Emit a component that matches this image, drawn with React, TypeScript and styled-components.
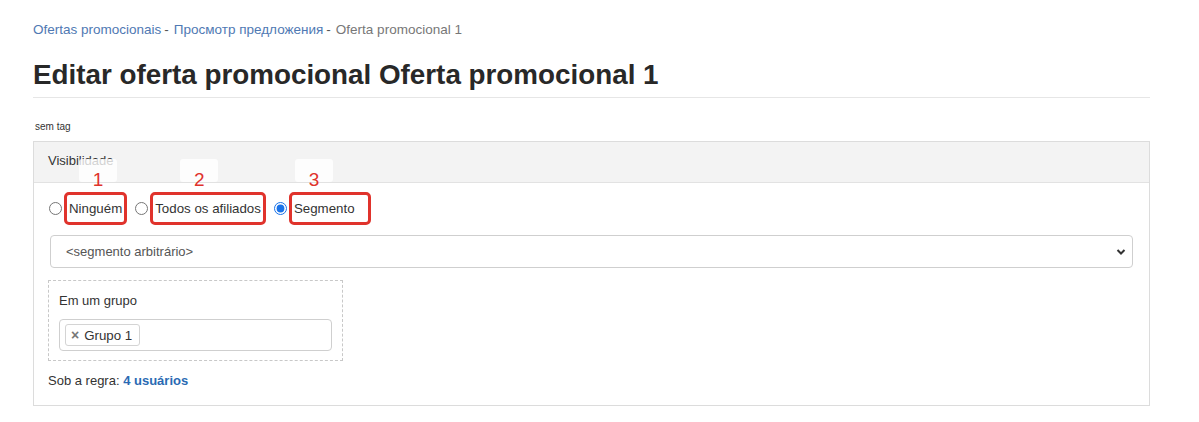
import React from "react";
import styled, { createGlobalStyle } from "styled-components";

const Global = createGlobalStyle`
  html, body { margin: 0; padding: 0; background: #fff; }
  body { font-family: "Liberation Sans", Arial, sans-serif; color: #333; }
  * { box-sizing: border-box; }
`;

const Page = styled.div`
  padding: 21px 49px 0 33px;
`;

const Breadcrumbs = styled.nav`
  display: flex;
  align-items: center;
  font-family: "Liberation Sans", Arial, sans-serif;
  font-size: 13.5px;
  line-height: 18px;
  color: #777;
`;

const Crumb = styled.a<{ $current?: boolean }>`
  color: ${(p) => (p.$current ? "#777" : "#4f79b3")};
  text-decoration: none;
`;

const Sep = styled.span`
  color: #555;
  margin: 0 5px 0 3px;
`;

const TitleBlock = styled.div`
  margin-top: 18px;
  padding-bottom: 4px;
  border-bottom: 1px solid #e6e6e6;
`;

const Title = styled.h1`
  margin: 0;
  font-family: "Liberation Sans", Arial, sans-serif;
  font-weight: 700;
  font-size: 27.8px;
  line-height: 36px;
  color: #282828;
`;

const TagNote = styled.div`
  margin: 23px 0 0 2px;
  font-size: 10px;
  line-height: 12px;
  color: #333;
`;

const Panel = styled.section`
  margin-top: 8px;
  border: 1px solid #dcdcdc;
  background: #fff;
`;

const PanelHeader = styled.div`
  height: 41px;
  background: #f3f3f3;
  border-bottom: 1px solid #e2e2e2;
  padding: 11px 14px 0;
  font-size: 13px;
  color: #333;
`;

const PanelBody = styled.div`
  padding: 9px 16px 16px 14px;
  display: flex;
  flex-direction: column;
`;

const RadioRow = styled.div`
  display: flex;
  align-items: center;
  height: 33px;
`;

const RadioInput = styled.input`
  width: 13px;
  height: 13px;
  margin: 0 2px 0 1px;
  accent-color: #1a73e8;
`;

const AnnotatedLabel = styled.label<{ $padRight: number }>`
  position: relative;
  display: flex;
  align-items: center;
  height: 33px;
  padding: 0 ${(p) => p.$padRight}px 0 2px;
  border: 3px solid #e0332c;
  border-radius: 5px;
  font-size: 13.3px;
  color: #333;
  margin-right: 7px;
  cursor: pointer;
`;

const Marker = styled.span<{ $left: number }>`
  position: absolute;
  top: -36px;
  left: ${(p) => p.$left}px;
  width: 38px;
  height: 23px;
  border-radius: 3px;
  background: rgba(255, 255, 255, 0.78);
  color: #e0332c;
  font-size: 19px;
  line-height: 41px;
  text-align: center;
`;

const SelectWrap = styled.div`
  position: relative;
  margin: 10px 0 0 2px;
`;

const Select = styled.select`
  appearance: none;
  width: 100%;
  height: 33px;
  border: 1px solid #cfcfcf;
  border-radius: 4px;
  background: #fff;
  padding: 0 15px;
  font-family: "Liberation Sans", Arial, sans-serif;
  font-size: 13px;
  color: #555;
`;

const Chevron = styled.svg`
  position: absolute;
  right: 7px;
  top: 13px;
  pointer-events: none;
`;

const GroupBox = styled.div`
  margin-top: 12px;
  width: 295px;
  border: 1px dashed #c8c8c8;
  padding: 12px 10px 9px 10px;
`;

const GroupLabel = styled.div`
  font-size: 13px;
  line-height: 16px;
  color: #333;
`;

const TagInput = styled.div`
  margin-top: 10px;
  height: 32px;
  border: 1px solid #cfcfcf;
  border-radius: 4px;
  padding: 4px 5px;
  display: flex;
  align-items: center;
`;

const Tag = styled.span`
  display: inline-flex;
  align-items: center;
  gap: 5px;
  height: 22px;
  padding: 0 7px 0 5px;
  border: 1px solid #d4d4d4;
  border-radius: 3px;
  background: #fff;
  font-size: 13.3px;
  color: #333;
`;

const TagRemove = styled.span`
  font-size: 14px;
  color: #777;
  font-weight: 700;
`;

const RuleLine = styled.div`
  margin-top: 12px;
  font-size: 13px;
  line-height: 16px;
  color: #333;
`;

const UserLink = styled.a`
  color: #2a6ab3;
  font-weight: 700;
  text-decoration: none;
`;

type Opt = { id: string; label: string; n: number; markerLeft: number; padRight: number };

const options: Opt[] = [
  { id: "none", label: "Ninguém", n: 1, markerLeft: 12, padRight: 2 },
  { id: "all", label: "Todos os afiliados", n: 2, markerLeft: 27, padRight: 2 },
  { id: "segment", label: "Segmento", n: 3, markerLeft: 3, padRight: 13 },
];

export default function App() {
  const [vis, setVis] = React.useState("segment");
  return (
    <>
      <Global />
      <Page>
        <Breadcrumbs>
          <Crumb href="#">Ofertas promocionais</Crumb>
          <Sep>-</Sep>
          <Crumb href="#">Просмотр предложения</Crumb>
          <Sep>-</Sep>
          <Crumb $current>Oferta promocional 1</Crumb>
        </Breadcrumbs>
        <TitleBlock>
          <Title>Editar oferta promocional Oferta promocional 1</Title>
        </TitleBlock>
        <TagNote>sem tag</TagNote>
        <Panel>
          <PanelHeader>Visibilidade</PanelHeader>
          <PanelBody>
            <RadioRow>
              {options.map((o) => (
                <React.Fragment key={o.id}>
                  <RadioInput
                    type="radio"
                    name="vis"
                    id={o.id}
                    checked={vis === o.id}
                    onChange={() => setVis(o.id)}
                  />
                  <AnnotatedLabel htmlFor={o.id} $padRight={o.padRight}>
                    <Marker $left={o.markerLeft}>{o.n}</Marker>
                    {o.label}
                  </AnnotatedLabel>
                </React.Fragment>
              ))}
            </RadioRow>
            <SelectWrap>
              <Select defaultValue="arb">
                <option value="arb">&lt;segmento arbitrário&gt;</option>
              </Select>
              <Chevron width="10" height="8" viewBox="0 0 10 8">
                <path d="M1.5 2 L5 5.5 L8.5 2" fill="none" stroke="#333" strokeWidth="2" />
              </Chevron>
            </SelectWrap>
            <GroupBox>
              <GroupLabel>Em um grupo</GroupLabel>
              <TagInput>
                <Tag>
                  <TagRemove>×</TagRemove>
                  Grupo 1
                </Tag>
              </TagInput>
            </GroupBox>
            <RuleLine>
              Sob a regra: <UserLink href="#">4 usuários</UserLink>
            </RuleLine>
          </PanelBody>
        </Panel>
      </Page>
    </>
  );
}
